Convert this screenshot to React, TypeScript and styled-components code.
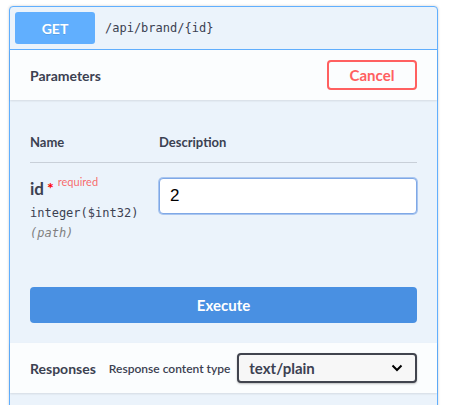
import styled, { createGlobalStyle } from "styled-components";

const GlobalStyle = createGlobalStyle`
  * { box-sizing: border-box; }
  body {
    margin: 0;
    background: #fff;
    font-family: Lato, "Noto Sans", sans-serif;
    color: #3b4151;
  }
`;

const Page = styled.div`
  padding: 6px 12px 0 9px;
  height: 405px;
  overflow: hidden;
`;

const OpBlock = styled.div`
  border: 1px solid #61affe;
  border-radius: 4px;
  background: #ebf3fb;
  box-shadow: 0 0 3px rgba(0, 0, 0, 0.19);
  min-height: 420px;
`;

const Summary = styled.div`
  display: flex;
  align-items: center;
  padding: 5px;
  border-bottom: 1px solid #61affe;
`;

const Method = styled.span`
  min-width: 80px;
  height: 32px;
  display: flex;
  align-items: center;
  justify-content: center;
  background: #61affe;
  border-radius: 3px;
  color: #fff;
  font-size: 14px;
  font-weight: 700;
  text-shadow: 0 1px 0 rgba(0, 0, 0, 0.1);
`;

const Path = styled.span`
  padding: 0 10px;
  font-family: "DejaVu Sans Mono", "Liberation Mono", monospace;
  font-size: 12px;
  color: #3b4151;
`;

const SectionHeader = styled.div`
  display: flex;
  align-items: center;
  justify-content: space-between;
  min-height: 50px;
  padding: 8px 20px;
  background: rgba(255, 255, 255, 0.8);
  box-shadow: 0 1px 2px rgba(0, 0, 0, 0.1);
`;

const HeaderTitle = styled.h4`
  margin: 0;
  font-size: 14px;
  font-weight: 700;
  color: #3b4151;
  white-space: nowrap;
`;

const CancelButton = styled.button`
  width: 90px;
  height: 30px;
  border: 2px solid #ff6060;
  border-radius: 4px;
  background: transparent;
  color: #ff6060;
  font-family: inherit;
  font-size: 15px;
  font-weight: 700;
`;

const ParamsBody = styled.div`
  padding: 23px 20px 0;
`;

const TableHead = styled.div`
  display: grid;
  grid-template-columns: 129px 1fr;
  padding: 12px 0;
  border-bottom: 1px solid rgba(59, 65, 81, 0.2);
  font-size: 13px;
  font-weight: 700;
  line-height: 15px;
`;

const ParamRow = styled.div`
  display: grid;
  grid-template-columns: 129px 1fr;
  padding-top: 15px;
  min-height: 124px;
`;

const ParamName = styled.div`
  display: flex;
  flex-direction: column;
`;

const NameLine = styled.div`
  display: flex;
  align-items: flex-start;
  font-size: 17px;
  font-weight: 700;
  line-height: 20px;
  padding-top: 1px;
`;

const Star = styled.span`
  color: red;
  font-size: 16px;
  margin-left: 3px;
  line-height: 18px;
`;

const Required = styled.span`
  color: rgba(255, 0, 0, 0.6);
  font-size: 11px;
  font-weight: 400;
  margin-left: 4px;
  line-height: 12px;
  margin-top: -3px;
`;

const TypeText = styled.div<{ $muted?: boolean }>`
  font-family: "DejaVu Sans Mono", "Liberation Mono", monospace;
  font-size: 12px;
  line-height: 20px;
  margin-top: ${({ $muted }) => ($muted ? "0" : "4px")};
  color: ${({ $muted }) => ($muted ? "#808080" : "#3b4151")};
  font-style: ${({ $muted }) => ($muted ? "italic" : "normal")};
`;

const ValueInput = styled.input`
  width: 100%;
  height: 36px;
  border: 1px solid #7fa8e6;
  box-shadow: 0 0 0 1px #a9c6f0;
  border-radius: 4px;
  background: #fff;
  padding: 0 10px;
  font-family: "Liberation Sans", Arial, sans-serif;
  font-size: 17px;
  color: #000;
  outline: none;
`;

const ExecuteWrap = styled.div`
  padding: 0 20px 20px;
`;

const ExecuteButton = styled.button`
  width: 100%;
  height: 36px;
  border: none;
  border-radius: 4px;
  background: #4990e2;
  color: #fff;
  font-family: inherit;
  font-size: 15px;
  font-weight: 700;
`;

const ResponsesHeader = styled(SectionHeader)`
  justify-content: flex-start;
`;

const ContentTypeLabel = styled.span`
  font-size: 12px;
  font-weight: 600;
  white-space: nowrap;
  margin: 0 7px 0 13px;
  flex-shrink: 0;
`;

const Select = styled.div`
  flex: 1;
  height: 30px;
  display: flex;
  align-items: center;
  justify-content: space-between;
  padding: 0 12px 0 10px;
  border: 2px solid #41444e;
  border-radius: 4px;
  background: #f7f7f7;
  box-shadow: 0 1px 2px rgba(0, 0, 0, 0.25);
  font-size: 15px;
  font-weight: 700;
`;

export default function App() {
  return (
    <>
      <GlobalStyle />
      <Page>
        <OpBlock>
          <Summary>
            <Method>GET</Method>
            <Path>/api/brand/&#123;id&#125;</Path>
          </Summary>
          <SectionHeader>
            <HeaderTitle>Parameters</HeaderTitle>
            <CancelButton>Cancel</CancelButton>
          </SectionHeader>
          <ParamsBody>
            <TableHead>
              <span>Name</span>
              <span>Description</span>
            </TableHead>
            <ParamRow>
              <ParamName>
                <NameLine>
                  id<Star>*</Star>
                  <Required>required</Required>
                </NameLine>
                <TypeText>integer($int32)</TypeText>
                <TypeText $muted>(path)</TypeText>
              </ParamName>
              <div>
                <ValueInput defaultValue="2" />
              </div>
            </ParamRow>
          </ParamsBody>
          <ExecuteWrap>
            <ExecuteButton>Execute</ExecuteButton>
          </ExecuteWrap>
          <ResponsesHeader>
            <HeaderTitle>Responses</HeaderTitle>
            <ContentTypeLabel>Response content type</ContentTypeLabel>
            <Select>
              <span>text/plain</span>
              <svg width="12" height="8" viewBox="0 0 12 8" fill="none">
                <path d="M1.5 1.5 6 6l4.5-4.5" stroke="#000" strokeWidth="2" />
              </svg>
            </Select>
          </ResponsesHeader>
        </OpBlock>
      </Page>
    </>
  );
}
